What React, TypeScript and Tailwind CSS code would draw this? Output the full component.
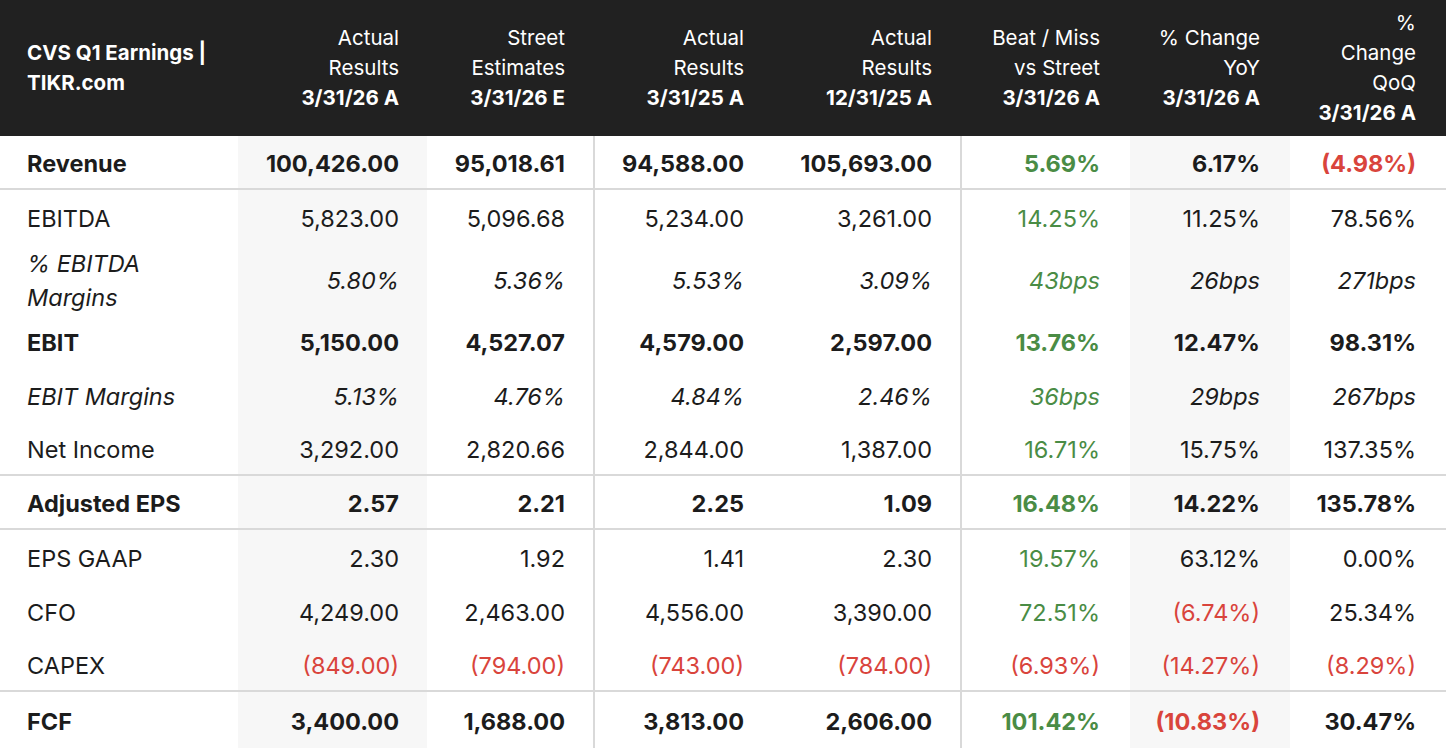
import React from "react";

type Tone = "n" | "g" | "r";
type Row = {
  label: string;
  vals: [string, Tone][];
  bold?: boolean;
  italic?: boolean;
  h: string;
  border?: boolean;
};

const N = (v: string): [string, Tone] => [v, "n"];
const G = (v: string): [string, Tone] => [v, "g"];
const R = (v: string): [string, Tone] => [v, "r"];

const rows: Row[] = [
  {
    label: "Revenue",
    bold: true,
    h: "h-[54px]",
    border: true,
    vals: [N("100,426.00"), N("95,018.61"), N("94,588.00"), N("105,693.00"), G("5.69%"), N("6.17%"), R("(4.98%)")],
  },
  {
    label: "EBITDA",
    h: "h-[54px]",
    vals: [N("5,823.00"), N("5,096.68"), N("5,234.00"), N("3,261.00"), G("14.25%"), N("11.25%"), N("78.56%")],
  },
  {
    label: "% EBITDA Margins",
    italic: true,
    h: "h-[70px]",
    vals: [N("5.80%"), N("5.36%"), N("5.53%"), N("3.09%"), G("43bps"), N("26bps"), N("271bps")],
  },
  {
    label: "EBIT",
    bold: true,
    h: "h-[54px]",
    vals: [N("5,150.00"), N("4,527.07"), N("4,579.00"), N("2,597.00"), G("13.76%"), N("12.47%"), N("98.31%")],
  },
  {
    label: "EBIT Margins",
    italic: true,
    h: "h-[54px]",
    vals: [N("5.13%"), N("4.76%"), N("4.84%"), N("2.46%"), G("36bps"), N("29bps"), N("267bps")],
  },
  {
    label: "Net Income",
    h: "h-[54px]",
    border: true,
    vals: [N("3,292.00"), N("2,820.66"), N("2,844.00"), N("1,387.00"), G("16.71%"), N("15.75%"), N("137.35%")],
  },
  {
    label: "Adjusted EPS",
    bold: true,
    h: "h-[54px]",
    border: true,
    vals: [N("2.57"), N("2.21"), N("2.25"), N("1.09"), G("16.48%"), N("14.22%"), N("135.78%")],
  },
  {
    label: "EPS GAAP",
    h: "h-[54px]",
    vals: [N("2.30"), N("1.92"), N("1.41"), N("2.30"), G("19.57%"), N("63.12%"), N("0.00%")],
  },
  {
    label: "CFO",
    h: "h-[54px]",
    vals: [N("4,249.00"), N("2,463.00"), N("4,556.00"), N("3,390.00"), G("72.51%"), R("(6.74%)"), N("25.34%")],
  },
  {
    label: "CAPEX",
    h: "h-[54px]",
    border: true,
    vals: [R("(849.00)"), R("(794.00)"), R("(743.00)"), R("(784.00)"), R("(6.93%)"), R("(14.27%)"), R("(8.29%)")],
  },
  {
    label: "FCF",
    bold: true,
    h: "h-[56px]",
    vals: [N("3,400.00"), N("1,688.00"), N("3,813.00"), N("2,606.00"), G("101.42%"), R("(10.83%)"), N("30.47%")],
  },
];

const cellCls = [
  "bg-[#f7f7f7] pr-7",
  "pr-7",
  "border-l-2 border-[#d9d9d9] pr-7",
  "pr-7",
  "border-l-2 border-[#d9d9d9] pr-[30px]",
  "bg-[#f7f7f7] pr-[30px]",
  "pr-[30px]",
];

const toneCls: Record<Tone, string> = {
  n: "text-[#1c1c1c]",
  g: "text-[#4a8c45]",
  r: "text-[#d9443c]",
};

const headers: { lines: string[]; date: string; pr: string }[] = [
  { lines: ["Actual", "Results"], date: "3/31/26 A", pr: "pr-7" },
  { lines: ["Street", "Estimates"], date: "3/31/26 E", pr: "pr-7" },
  { lines: ["Actual", "Results"], date: "3/31/25 A", pr: "pr-7" },
  { lines: ["Actual", "Results"], date: "12/31/25 A", pr: "pr-7" },
  { lines: ["Beat / Miss", "vs Street"], date: "3/31/26 A", pr: "pr-[30px]" },
  { lines: ["% Change", "YoY"], date: "3/31/26 A", pr: "pr-[30px]" },
  { lines: ["%", "Change", "QoQ"], date: "3/31/26 A", pr: "pr-[30px]" },
];

const grid = "grid grid-cols-[238px_189px_166px_179px_188px_170px_160px_156px]";

export default function App() {
  return (
    <div
      className="w-[1446px] h-[748px] overflow-hidden bg-white"
      style={{ fontFamily: "Inter, 'Noto Sans', sans-serif" }}
    >
      <div className={`${grid} h-[136px] bg-[#212121] text-white text-[20.5px] leading-[30px]`}>
        <div className="flex items-center pl-[27px] font-bold">
          <div>
            <div>CVS Q1 Earnings |</div>
            <div>TIKR.com</div>
          </div>
        </div>
        {headers.map((h, i) => (
          <div key={i} className={`flex items-center justify-end text-right ${h.pr}`}>
            <div>
              {h.lines.map((l, j) => (
                <div key={j}>{l}</div>
              ))}
              <div className="font-bold">{h.date}</div>
            </div>
          </div>
        ))}
      </div>
      {rows.map((r, i) => (
        <div
          key={i}
          className={`${grid} ${r.h} ${r.border ? "border-b-2 border-[#d9d9d9]" : ""} text-[23.5px] leading-[34px] ${
            r.bold ? "font-bold" : ""
          } ${r.italic ? "italic" : ""}`}
        >
          <div className="flex items-center pl-[27px] pr-4 pt-[3px] text-[#1c1c1c]">
            <span className={r.label.startsWith("%") ? "w-[150px]" : ""}>{r.label}</span>
          </div>
          {r.vals.map(([v, t], j) => (
            <div key={j} className={`flex items-center justify-end pt-[3px] ${cellCls[j]} ${toneCls[t]}`}>
              {v}
            </div>
          ))}
        </div>
      ))}
    </div>
  );
}
